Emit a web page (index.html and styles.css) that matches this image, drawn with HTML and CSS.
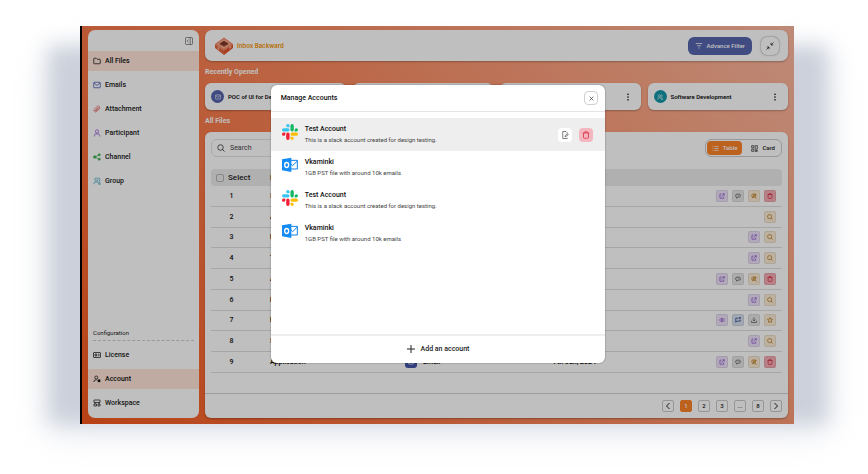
FILE: index.html
```html
<!DOCTYPE html>
<html lang="en">
<head>
<meta charset="utf-8">
<meta name="viewport" content="width=device-width, initial-scale=1">
<title>Inbox Backward</title>
<link rel="stylesheet" href="styles.css">
</head>
<body>
<svg class="sprite" aria-hidden="true">
  <symbol id="folder" viewBox="0 0 16 16"><path d="M1.5 12.5v-9q0-1 1-1h3.7l2 2h5.3q1 0 1 1v7q0 1-1 1h-11q-1 0-1-1z"/></symbol>
  <symbol id="mail" viewBox="0 0 16 16"><rect x="1.5" y="2.5" width="13" height="11" rx="1"/><path d="M2 4l6 5 6-5"/></symbol>
  <symbol id="clip" viewBox="0 0 16 16"><path d="M14 6.5l-6.500 6.500a3.300 3.300 0 0 1-4.700-4.700l6-6a2.700 2.700 0 0 1 3.800 3.800l-5.500 5.500a1.200 1.200 0 0 1-1.800-1.800l4.700-4.700M4 12l7-7"/></symbol>
  <symbol id="user" viewBox="0 0 16 16"><circle cx="8" cy="5" r="3.300"/><path d="M2.500 15v-1.500q0-4 5.500-4t5.500 4v1.500"/></symbol>
  <symbol id="share" viewBox="0 0 16 16"><path d="M12 4L4 8l8 4.500"/><g fill="currentColor"><circle cx="12.500" cy="3.500" r="2"/><circle cx="3.500" cy="8" r="2.500"/><circle cx="12.500" cy="12.500" r="2"/></g></symbol>
  <symbol id="group" viewBox="0 0 16 16"><circle cx="6.500" cy="5" r="3"/><path d="M1.500 14.500q0-5 5-5t5 5M10.500 2q3.500 0 3.500 3t-2.500 3.500q3 1 3 6h-3"/></symbol>
  <symbol id="license" viewBox="0 0 16 16"><rect x="1" y="3" width="14" height="10" rx="1"/><path d="M4 6h3.500v4H4zM10 6.500h3M10 9.500h3"/></symbol>
  <symbol id="account" viewBox="0 0 16 16"><circle cx="6.500" cy="5" r="3"/><path d="M1.500 14q0-5 6-4.500"/><circle cx="12" cy="11.500" r="2" fill="currentColor"/><path d="M12 8.500v6M9.400 10l5.200 3M14.600 10l-5.200 3"/></symbol>
  <symbol id="workspace" viewBox="0 0 16 16"><path d="M2 2h12v5H2zM2 10h5v4H2zM10 10h4v4h-4zM4 7v3M12 7v3"/></symbol>
  <symbol id="panel" viewBox="0 0 16 16"><rect x="1" y="1" width="14" height="14" rx="2"/><path d="M10.500 1v14M7 5L4.500 8 7 11"/></symbol>
  <symbol id="search" viewBox="0 0 16 16"><circle cx="7" cy="7" r="5.500"/><path d="M11 11l4 4"/></symbol>
  <symbol id="filter" viewBox="0 0 16 16"><path d="M1.500 3h13M4 7.500h8M6.500 12h3"/></symbol>
  <symbol id="shrink" viewBox="0 0 16 16"><path d="M15 1l-5 5M10 1.500V6h4.500M1 15l5-5M1.500 10H6v4.500"/></symbol>
  <symbol id="dots" viewBox="0 0 16 16"><g fill="currentColor" stroke="none"><circle cx="8" cy="2.500" r="1.700"/><circle cx="8" cy="8" r="1.700"/><circle cx="8" cy="13.500" r="1.700"/></g></symbol>
  <symbol id="list" viewBox="0 0 16 16"><path d="M1 3.500h2M5 3.500h10M1 8h2M5 8h10M1 12.500h2M5 12.500h10"/></symbol>
  <symbol id="cards" viewBox="0 0 16 16"><path d="M1.500 1.500h5v5h-5zM9.500 1.500h5v8h-5zM1.500 9.500h5v5h-5zM9.500 12.500h5v2h-5z"/></symbol>
  <symbol id="open" viewBox="0 0 16 16"><path d="M7 3H2.500v11h10V9.500M7 9.500L14 2M9.500 2H14v4.500"/></symbol>
  <symbol id="chat" viewBox="0 0 16 16"><path d="M5 3h6q3.500 0 3.500 4T11 11H7l-3 3v-3q-2.500-.5-2.500-4T5 3zM5 7h1.500M9.500 7H11"/></symbol>
  <symbol id="find" viewBox="0 0 16 16"><circle cx="7" cy="7" r="5"/><path d="M10.500 10.500L15 15M4 14l8-12M13 2v5M7 4.500v5"/></symbol>
  <symbol id="trash" viewBox="0 0 16 16"><path d="M1.500 4h13M5.500 4V1.500h5V4M3 4v8.500q0 2 2 2h6q2 0 2-2V4"/></symbol>
  <symbol id="eye" viewBox="0 0 16 16"><path d="M1 8q7-9 14 0-7 9-14 0z"/><circle cx="8" cy="8" r="2"/></symbol>
  <symbol id="note" viewBox="0 0 16 16"><path d="M9 3H2v11l3-3h9V7M10 5.500L14.500 1M11 1h3.500v3.500"/></symbol>
  <symbol id="download" viewBox="0 0 16 16"><path d="M8 1v9M4.500 7L8 10.500 11.500 7M1.500 10v4.500h13V10"/></symbol>
  <symbol id="star" viewBox="0 0 16 16"><path d="M8 1.500l2 4.300 4.700.6-3.500 3.200.9 4.800L8 12l-4.100 2.400.9-4.800L1.300 6.400 6 5.800z"/></symbol>
  <symbol id="edit" viewBox="0 0 16 16"><path d="M12.500 5V3.500L10 1H3.500v14h9v-1.500M8 11.500l.5-2.500L13 5.500l1.500 2L10 11z"/></symbol>
  <symbol id="close" viewBox="0 0 16 16"><path d="M2 2l12 12M14 2L2 14"/></symbol>
  <symbol id="plus" viewBox="0 0 16 16"><path d="M8 0v16M0 8h16"/></symbol>
  <symbol id="prev" viewBox="0 0 16 16"><path d="M11 2L5 8l6 6"/></symbol>
  <symbol id="next" viewBox="0 0 16 16"><path d="M5 2l6 6-6 6"/></symbol>
  <symbol id="slack" viewBox="0 0 24 24"><g stroke="none">
    <path fill="#36c5f0" d="M8.800 0a2.500 2.500 0 1 0 0 5h2.500V2.500A2.500 2.500 0 0 0 8.800 0zM2.500 6.300h6.300a2.500 2.500 0 0 1 0 5H2.500a2.500 2.500 0 0 1 0-5z"/>
    <path fill="#15b866" d="M24 8.800a2.500 2.500 0 1 0-5 0v2.500h2.500A2.500 2.500 0 0 0 24 8.800zM17.700 2.500v6.300a2.500 2.500 0 0 1-5 0V2.500a2.500 2.500 0 0 1 5 0z"/>
    <path fill="#fdbd08" d="M15.200 24a2.500 2.500 0 1 0 0-5h-2.500v2.500a2.500 2.500 0 0 0 2.500 2.500zM21.500 17.700h-6.300a2.500 2.500 0 0 1 0-5h6.300a2.500 2.500 0 0 1 0 5z"/>
    <path fill="#f51d35" d="M0 15.200a2.500 2.500 0 1 0 5 0v-2.500H2.500A2.500 2.500 0 0 0 0 15.200zM6.300 21.500v-6.300a2.500 2.500 0 0 1 5 0v6.300a2.500 2.500 0 0 1-5 0z"/></g></symbol>
  <symbol id="outlook" viewBox="0 0 24 24"><path fill="#fff" stroke="#0f80e6" stroke-width="1.500" d="M12 5h11v13H12z"/><path fill="none" stroke="#0f80e6" stroke-width="1.500" d="M13 10l3 3 7-7"/><path fill="#148bf5" stroke="none" d="M0 3.500L14 1v21.500L0 20z"/><ellipse cx="7" cy="12" rx="3" ry="3.700" fill="none" stroke="#fff" stroke-width="2"/></symbol>
</svg>

<div class="window">
  <aside class="sidebar">
    <div class="sidebar-top"><button class="plain" aria-label="Collapse sidebar"><svg class="ico"><use href="#panel"/></svg></button></div>
    <nav class="nav" aria-label="Library">
      <a class="active" href="#"><svg class="ico"><use href="#folder"/></svg>All Files</a>
      <a href="#"><svg class="ico navy"><use href="#mail"/></svg>Emails</a>
      <a href="#"><svg class="ico red"><use href="#clip"/></svg>Attachment</a>
      <a href="#"><svg class="ico purple"><use href="#user"/></svg>Participant</a>
      <a href="#"><svg class="ico green"><use href="#share"/></svg>Channel</a>
      <a href="#"><svg class="ico teal"><use href="#group"/></svg>Group</a>
    </nav>
    <nav class="nav config" aria-label="Configuration">
      <h2>Configuration</h2>
      <a href="#"><svg class="ico"><use href="#license"/></svg>License</a>
      <a class="active" href="#"><svg class="ico"><use href="#account"/></svg>Account</a>
      <a href="#"><svg class="ico"><use href="#workspace"/></svg>Workspace</a>
    </nav>
  </aside>

  <main class="main">
    <header class="topbar">
      <svg class="logo" viewBox="0 0 36 34"><path fill="#e2653f" d="M1 13L18 25v9L1 21z"/><path fill="#e2532c" d="M35 13L18 25v9l17-13z"/><path fill="#ffa789" d="M6 18l3 2v5l-3-2zM28 19l4-3v4l-4 3z"/><path fill="#f08461" d="M18 1l17 12-17 12L1 13z"/><path fill="#ffb59a" d="M18 4l13 9-13 9-13-9z"/><path fill="#a04a30" d="M18 7l9 6-9 6-9-6z"/><path fill="#7c3827" d="M18 7l9 6-9 2-9-2z"/></svg>
      <span class="brand">Inbox Backward</span>
      <button class="filter"><svg class="ico"><use href="#filter"/></svg>Advance Filter</button>
      <button class="shrink" aria-label="Exit full screen"><svg class="ico"><use href="#shrink"/></svg></button>
    </header>

    <h1>Recently Opened</h1>
    <section class="recent">
      <article class="card"><span class="disc"><svg class="ico"><use href="#mail"/></svg></span><b>POC of UI for Desktop</b><button class="plain" aria-label="More"><svg class="ico"><use href="#dots"/></svg></button></article>
      <article class="card"><span class="disc"><svg class="ico"><use href="#mail"/></svg></span><b>Design</b><button class="plain" aria-label="More"><svg class="ico"><use href="#dots"/></svg></button></article>
      <article class="card"><span class="disc"><svg class="ico"><use href="#mail"/></svg></span><b>Application</b><button class="plain" aria-label="More"><svg class="ico"><use href="#dots"/></svg></button></article>
      <article class="card"><span class="disc disc-teal"><svg class="ico"><use href="#group"/></svg></span><b>Software Development</b><button class="plain" aria-label="More"><svg class="ico"><use href="#dots"/></svg></button></article>
    </section>

    <h1>All Files</h1>
    <section class="panel">
      <div class="toolbar">
        <label class="search"><svg class="ico"><use href="#search"/></svg><input type="search" placeholder="Search" aria-label="Search"></label>
        <div class="switch">
          <button class="on"><svg class="ico"><use href="#list"/></svg>Table</button>
          <button><svg class="ico"><use href="#cards"/></svg>Card</button>
        </div>
      </div>
      <table>
        <colgroup><col class="c-no"><col class="c-name"><col class="c-type"><col class="c-date"><col></colgroup>
        <thead><tr><th><label><input type="checkbox">Select</label></th><th>Name</th><th>Type</th><th>Date</th><th></th></tr></thead>
        <tbody>
          <tr><td>1</td><td>Software</td><td><span class="type"><i><svg class="ico"><use href="#mail"/></svg></i>Email</span></td><td>7th Jun, 2024</td><td><div class="acts"><button class="t-purple" aria-label="Open"><svg class="ico"><use href="#open"/></svg></button><button class="t-gray" aria-label="Chat"><svg class="ico"><use href="#chat"/></svg></button><button class="t-amber" aria-label="Inspect"><svg class="ico"><use href="#find"/></svg></button><button class="t-red" aria-label="Delete"><svg class="ico"><use href="#trash"/></svg></button></div></td></tr>
          <tr><td>2</td><td>Application</td><td><span class="type"><i><svg class="ico"><use href="#mail"/></svg></i>Email</span></td><td>7th Jun, 2024</td><td><div class="acts"><button class="t-amber" aria-label="Search"><svg class="ico"><use href="#search"/></svg></button></div></td></tr>
          <tr><td>3</td><td>Design</td><td><span class="type"><i><svg class="ico"><use href="#mail"/></svg></i>Email</span></td><td>7th Jun, 2024</td><td><div class="acts"><button class="t-purple" aria-label="Open"><svg class="ico"><use href="#open"/></svg></button><button class="t-amber" aria-label="Search"><svg class="ico"><use href="#search"/></svg></button></div></td></tr>
          <tr><td>4</td><td>Testing</td><td><span class="type"><i><svg class="ico"><use href="#mail"/></svg></i>Email</span></td><td>7th Jun, 2024</td><td><div class="acts"><button class="t-purple" aria-label="Open"><svg class="ico"><use href="#open"/></svg></button><button class="t-amber" aria-label="Search"><svg class="ico"><use href="#search"/></svg></button></div></td></tr>
          <tr><td>5</td><td>Application</td><td><span class="type"><i><svg class="ico"><use href="#mail"/></svg></i>Email</span></td><td>7th Jun, 2024</td><td><div class="acts"><button class="t-purple" aria-label="Open"><svg class="ico"><use href="#open"/></svg></button><button class="t-gray" aria-label="Chat"><svg class="ico"><use href="#chat"/></svg></button><button class="t-amber" aria-label="Inspect"><svg class="ico"><use href="#find"/></svg></button><button class="t-red" aria-label="Delete"><svg class="ico"><use href="#trash"/></svg></button></div></td></tr>
          <tr><td>6</td><td>Design</td><td><span class="type"><i><svg class="ico"><use href="#mail"/></svg></i>Email</span></td><td>7th Jun, 2024</td><td><div class="acts"><button class="t-purple" aria-label="Open"><svg class="ico"><use href="#open"/></svg></button><button class="t-amber" aria-label="Search"><svg class="ico"><use href="#search"/></svg></button></div></td></tr>
          <tr><td>7</td><td>Design</td><td><span class="type"><i><svg class="ico"><use href="#mail"/></svg></i>Email</span></td><td>7th Jun, 2024</td><td><div class="acts"><button class="t-purple" aria-label="View"><svg class="ico"><use href="#eye"/></svg></button><button class="t-blue" aria-label="Reply"><svg class="ico"><use href="#note"/></svg></button><button class="t-gray" aria-label="Download"><svg class="ico"><use href="#download"/></svg></button><button class="t-amber" aria-label="Favourite"><svg class="ico"><use href="#star"/></svg></button></div></td></tr>
          <tr><td>8</td><td>Software</td><td><span class="type"><i><svg class="ico"><use href="#mail"/></svg></i>Email</span></td><td>7th Jun, 2024</td><td><div class="acts"><button class="t-purple" aria-label="Open"><svg class="ico"><use href="#open"/></svg></button><button class="t-amber" aria-label="Search"><svg class="ico"><use href="#search"/></svg></button></div></td></tr>
          <tr><td>9</td><td>Application</td><td><span class="type"><i><svg class="ico"><use href="#mail"/></svg></i>Email</span></td><td>7th Jun, 2024</td><td><div class="acts"><button class="t-purple" aria-label="Open"><svg class="ico"><use href="#open"/></svg></button><button class="t-gray" aria-label="Chat"><svg class="ico"><use href="#chat"/></svg></button><button class="t-amber" aria-label="Inspect"><svg class="ico"><use href="#find"/></svg></button><button class="t-red" aria-label="Delete"><svg class="ico"><use href="#trash"/></svg></button></div></td></tr>
        </tbody>
      </table>
      <footer class="pager">
        <button aria-label="Previous"><svg class="ico"><use href="#prev"/></svg></button>
        <button class="on">1</button><button>2</button><button>3</button><button>...</button><button>8</button>
        <button aria-label="Next"><svg class="ico"><use href="#next"/></svg></button>
      </footer>
    </section>
  </main>

  <div class="overlay">
    <section class="modal" role="dialog" aria-labelledby="dlg-title">
      <header><h2 id="dlg-title">Manage Accounts</h2><button class="close" aria-label="Close"><svg class="ico"><use href="#close"/></svg></button></header>
      <ul>
        <li class="selected"><svg class="app"><use href="#slack"/></svg><div><h3>Test Account</h3><p>This is a slack account created for design testing.</p></div><button class="edit" aria-label="Edit"><svg class="ico"><use href="#edit"/></svg></button><button class="remove" aria-label="Delete"><svg class="ico"><use href="#trash"/></svg></button></li>
        <li><svg class="app"><use href="#outlook"/></svg><div><h3>Vkaminki</h3><p>1GB PST file with around 10k emails</p></div></li>
        <li><svg class="app"><use href="#slack"/></svg><div><h3>Test Account</h3><p>This is a slack account created for design testing.</p></div></li>
        <li><svg class="app"><use href="#outlook"/></svg><div><h3>Vkaminki</h3><p>1GB PST file with around 10k emails</p></div></li>
      </ul>
      <button class="add"><svg class="ico"><use href="#plus"/></svg>Add an account</button>
    </section>
  </div>
</div>
</body>
</html>
```
FILE: styles.css
```css
* { box-sizing: border-box; margin: 0; padding: 0; }
body {
  display: flex;
  min-height: 100vh;
  padding: 26px 74px 50px 80px;
  background: #fff;
  color: #222;
  font: 500 7px/10px Roboto, sans-serif;
  overflow: hidden;
}
.sprite { position: absolute; width: 0; height: 0; }
button, input { font: inherit; color: inherit; border: 0; background: none; }
button { display: flex; align-items: center; justify-content: center; cursor: pointer; }
a { color: inherit; text-decoration: none; }
.ico { width: 8px; height: 8px; flex: none; fill: none; stroke: currentColor; stroke-width: 2; }

.window {
  position: relative;
  flex: 1;
  display: grid;
  grid-template-columns: 111px 1fr;
  gap: 6px;
  padding: 4px 6px 6px;
  border-left: 2px solid #000;
  background: linear-gradient(50deg, #f6581d, #fb9068 58%, #fdb9a0);
}
.window::before {
  content: "";
  position: absolute;
  z-index: -1;
  inset: 20px -34px 0 -34px;
  background: #cbd0db;
  filter: blur(10px);
  box-shadow: 0 8px 30px #e6e8ee;
}

.sidebar { display: flex; flex-direction: column; padding-bottom: 5px; border-radius: 7px; background: #fff; }
.sidebar-top { display: flex; justify-content: flex-end; align-items: center; height: 21px; padding-right: 6px; }
.sidebar-top .ico { stroke-width: 1; }
.nav { display: grid; gap: 4px; }
.nav a { display: flex; align-items: center; gap: 4px; height: 20px; padding: 0 5px; }
.nav .ico { stroke-width: 1.5; }
.nav a.active { background: #ffe5d9; color: #111; }
.config { margin-top: auto; }
.config h2 { margin: 0 5px; padding-bottom: 2px; border-bottom: 1px dashed #ccc; font-size: 6px; font-weight: 400; line-height: 10px; }
.navy { color: #3c4da8; }
.red { color: #e06464; }
.purple { color: #8a4fd0; }
.green { color: #3fae54; }
.teal { color: #3aa5bd; }

.main { display: flex; flex-direction: column; min-width: 0; }
.topbar { display: flex; align-items: center; height: 31px; padding: 0 9px; border-radius: 7px; background: #fff; box-shadow: 0 1px 2px #0004; }
.logo { width: 20px; height: 18px; margin-right: 3px; }
.brand { flex: 1; color: #f59c1c; font: 700 6px/10px Inter, sans-serif; }
.filter { gap: 4px; height: 18px; padding: 0 7px; margin-right: 9px; border-radius: 6px; background: #5564ac; color: #fff; font-size: 6px; }
.filter .ico { stroke-width: 1.5; }
.shrink { width: 18px; height: 18px; border-radius: 6px; box-shadow: 0 0 2px #0008; }
.shrink .ico { stroke-width: 1.5; }
.main h1 { padding-top: 1px; color: #fff; font-size: 7px; font-weight: 700; line-height: 21px; }
.recent { display: grid; grid-template-columns: repeat(4, 1fr); gap: 7px; }
.card { display: flex; align-items: center; gap: 4px; height: 27px; padding: 0 9px 0 6px; border-radius: 6px; background: #fff; font-size: 6px; box-shadow: 0 1px 2px #0004; }
.card b { flex: 1; font-weight: 600; color: #111; white-space: nowrap; }
.disc { display: grid; place-items: center; width: 13px; height: 13px; border-radius: 50%; background: #5564ac; color: #fff; }
.disc .ico { width: 6px; height: 6px; stroke-width: 1.5; }
.disc-teal { background: #1596a8; }

.panel { flex: 1; display: flex; flex-direction: column; border-radius: 6px; background: #fff; box-shadow: 0 1px 2px #0004; }
.toolbar { display: flex; justify-content: space-between; height: 18px; margin: 7px 6px 12px; }
.search { display: flex; align-items: center; gap: 5px; width: 160px; padding: 0 5px; border: 1px solid #e2e2e2; border-radius: 6px; }
.search .ico { stroke-width: 1.5; }
.search input { width: 100%; outline: 0; font-weight: 400; }
.search input::placeholder { color: #444; opacity: 1; }
.switch { display: flex; gap: 4px; padding: 1px; border: 1px solid #ccc; border-radius: 6px; }
.switch button { gap: 4px; height: 14px; padding: 0 5px; border-radius: 4px; font-size: 6px; }
.switch .ico { width: 7px; height: 7px; stroke-width: 1.5; }
.switch .on, .pager .on { border-color: #fd8228; background: #fd8228; color: #fff; }

table { flex: 1; margin: 0 6px 20px; border-collapse: separate; border-spacing: 0; table-layout: fixed; text-align: left; }
.c-no { width: 59px; }
.c-name { width: 135px; }
.c-type { width: 148px; }
.c-date { width: 80px; }
th { height: 17px; background: #ebebeb; font-weight: 500; font-size: 8px; }
th:first-child { border-radius: 4px 0 0 4px; }
th:last-child { border-radius: 0 4px 4px 0; }
th label { display: flex; align-items: center; gap: 4px; padding-left: 5px; }
th input { appearance: none; width: 8px; height: 8px; border: 1px solid #b5b5b5; border-radius: 2px; }
td { border-bottom: 1px solid #dedede; color: #111; font-weight: 600; }
td:first-child { padding-right: 18px; text-align: center; font-weight: 500; }
.type { display: flex; align-items: center; gap: 6px; }
.type i { display: grid; place-items: center; width: 12px; height: 12px; border-radius: 3px; background: #4254a8; color: #fff; }
.type .ico { width: 6px; height: 6px; }
.acts { display: flex; justify-content: flex-end; gap: 4px; padding-right: 6px; }
.acts button { width: 12px; height: 12px; border: 1px solid #0001; border-radius: 2px; }
.acts .ico { width: 6px; height: 6px; }
.t-purple { background: #ece2f8; color: #8f57cf; }
.t-gray { background: #e6e6e6; color: #555; }
.t-amber { background: #fbecd6; color: #ba7a1d; }
.t-red { background: #f5adb5; color: #d13244; }
.t-blue { background: #d9e0ee; color: #23428e; }

.pager { display: flex; align-items: center; justify-content: flex-end; gap: 6px; height: 25px; padding-right: 6px; border-top: 1px solid #d0d0d0; }
.pager button { width: 12px; height: 12px; border: 1px solid #c8c8c8; border-radius: 2px; font-size: 6px; }

.overlay { position: absolute; inset: 0; display: grid; place-items: center; padding-bottom: 2px; background: rgb(0 0 0 / 25%); }
.modal { display: flex; flex-direction: column; width: 47%; height: 70%; border-radius: 6px; background: #fff; box-shadow: 0 0 2px #0006; }
.modal header { display: flex; align-items: center; justify-content: space-between; height: 27px; padding: 0 7px 0 10px; border-bottom: 1px solid #e4e4e4; }
.modal h2, .modal h3 { font-size: 7px; font-weight: 500; line-height: 10px; color: #111; }
.close, .edit, .remove { width: 14px; height: 14px; border-radius: 4px; }
.close { border: 1px solid #d0d0d0; }
.close .ico { width: 5px; height: 5px; }
.modal ul { flex: 1; margin-top: 6px; list-style: none; }
.modal li { display: flex; align-items: center; gap: 7px; height: 33px; padding: 0 12px 0 11px; }
.modal li div { flex: 1; }
.modal p { color: #444; font-size: 6px; font-weight: 400; line-height: 11px; }
.selected { background: #eee; }
.app { width: 16px; height: 16px; margin-bottom: 6px; }
.edit { background: #fff; color: #555; }
.edit .ico, .remove .ico { stroke-width: 1.5; }
.remove { background: #f5b7bf; color: #d8263e; }
.add { gap: 6px; height: 29px; border-top: 2px solid #eee; }
.add .ico { stroke-width: 2; }
```
